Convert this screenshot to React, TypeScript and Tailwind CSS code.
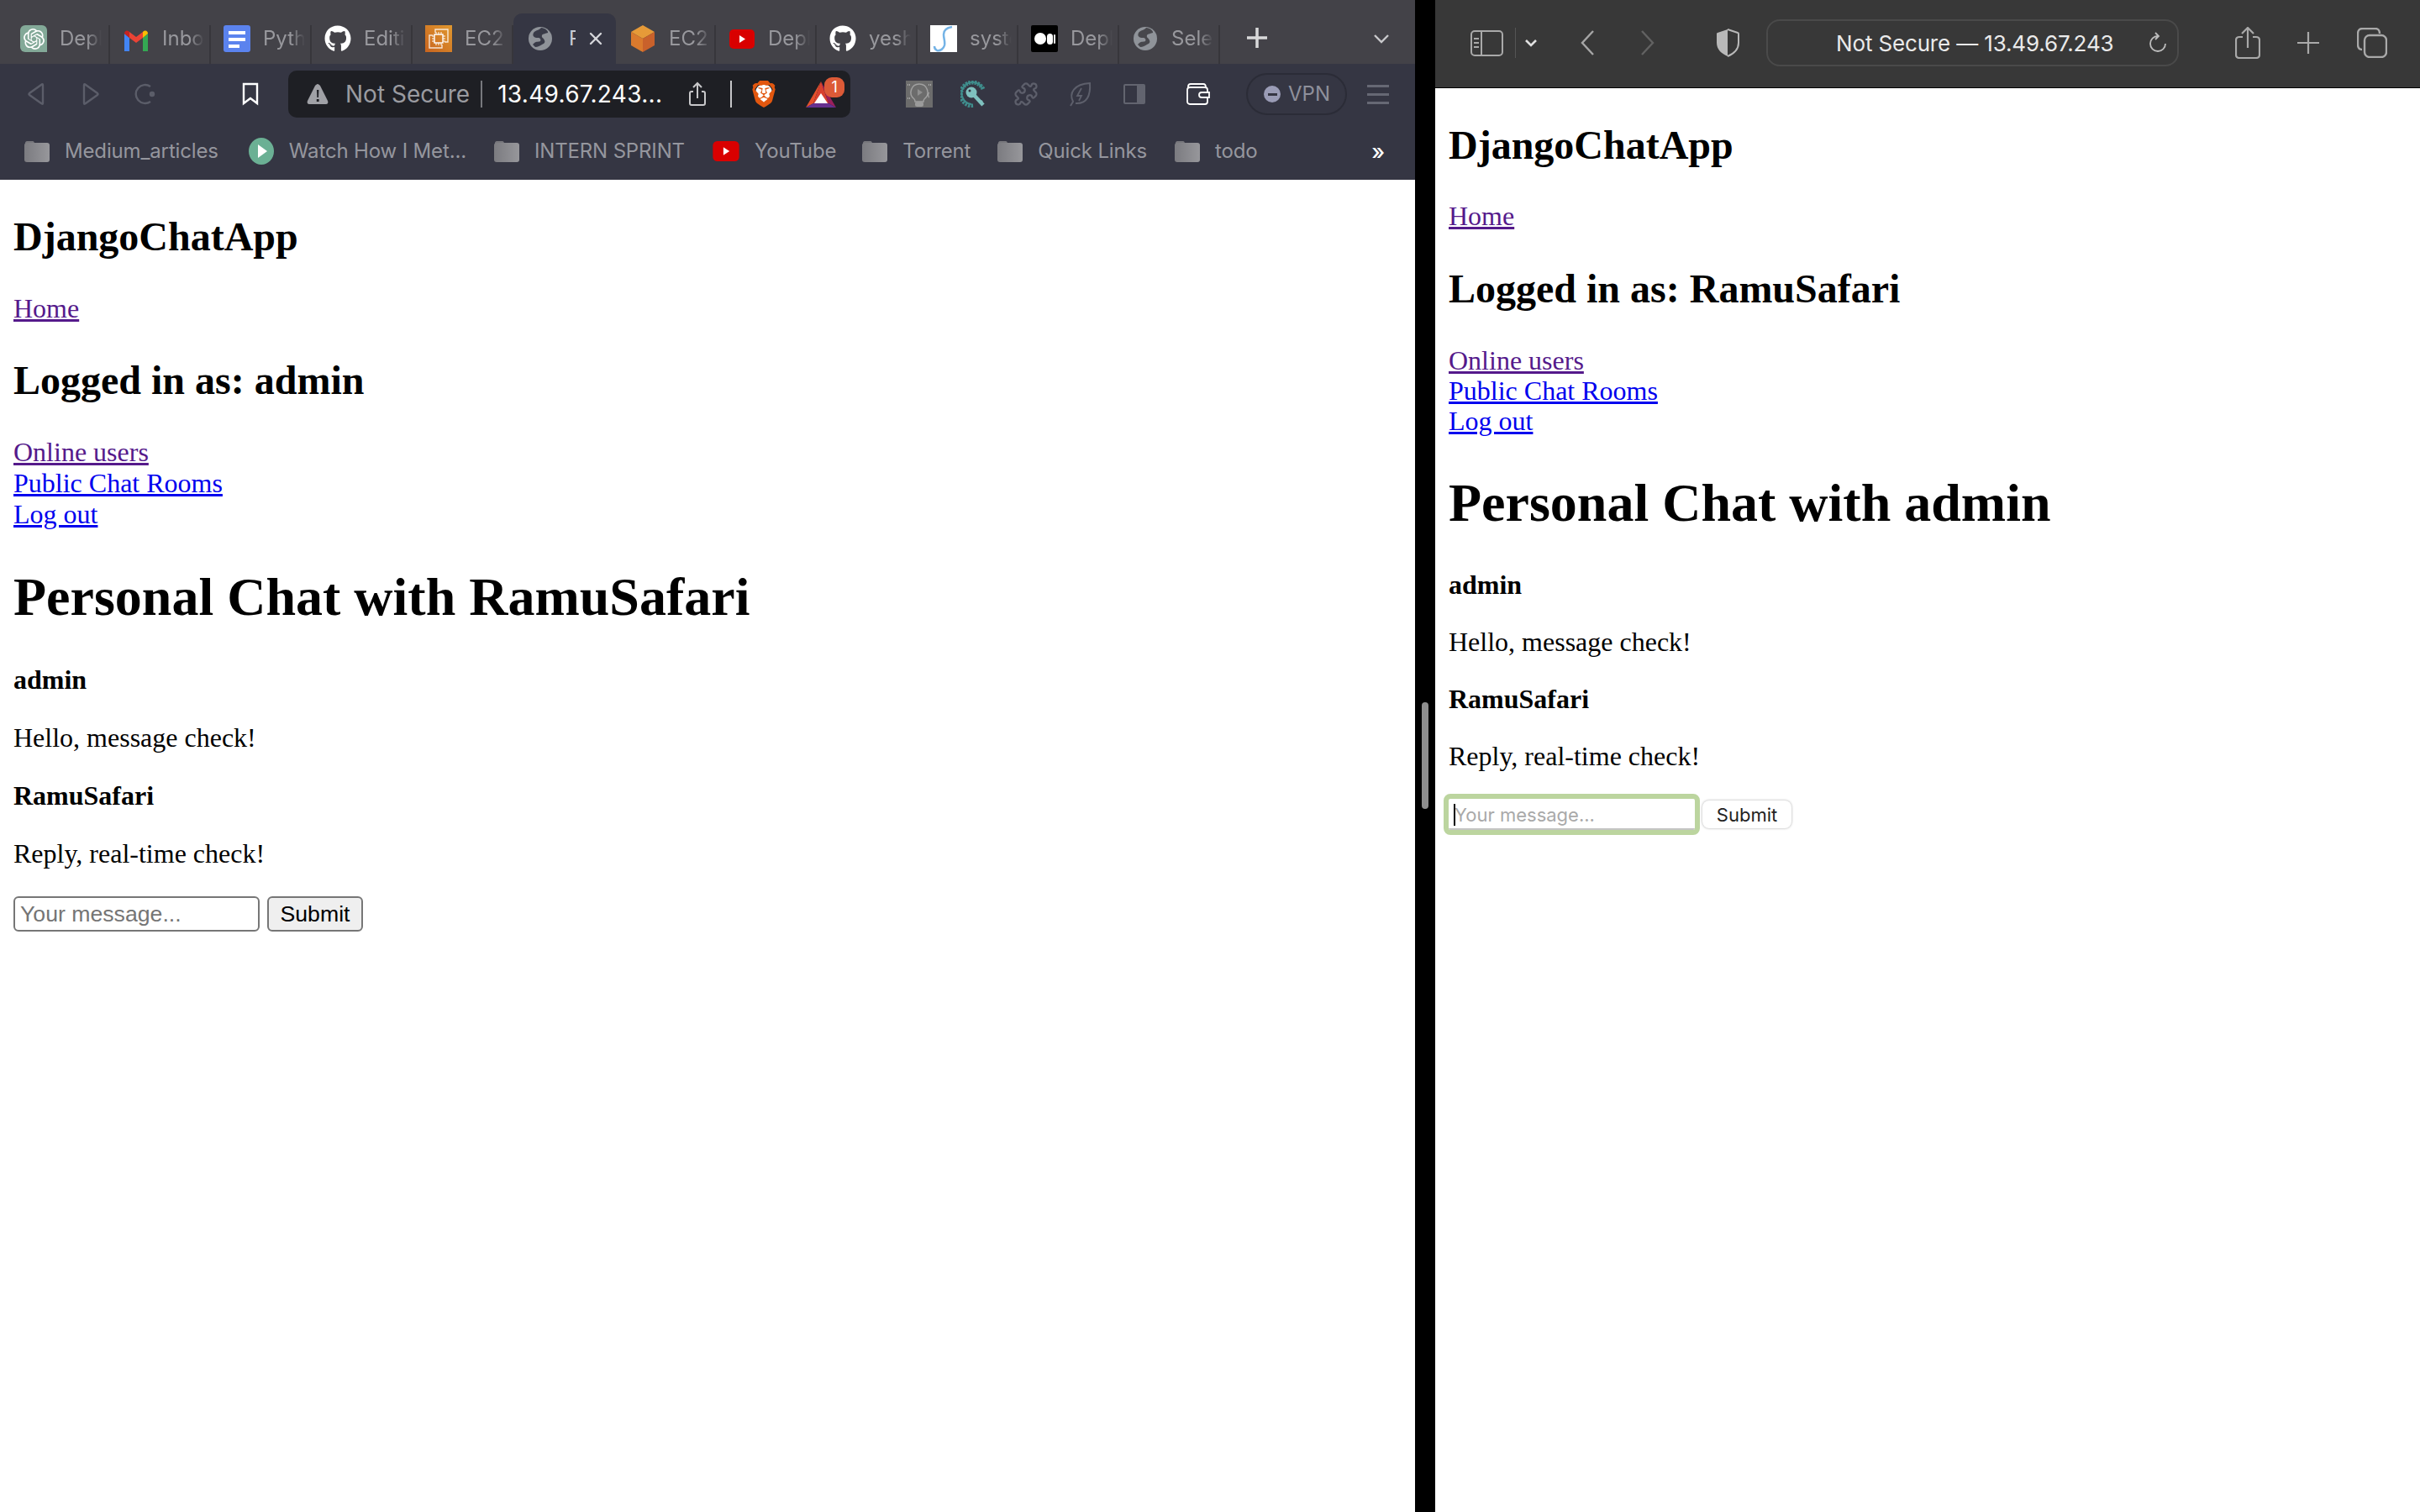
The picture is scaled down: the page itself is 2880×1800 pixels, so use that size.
import { ReactNode } from 'react';
import { FaGithub } from 'react-icons/fa';
import { SiBrave, SiOpenai } from 'react-icons/si';
import { Puzzle, X } from 'lucide-react';

const Gmail = () => (
  <svg width="32" height="32" viewBox="0 0 32 32">
    <path d="M2 10v21h6V15z" fill="#4285f4" />
    <path d="M30 10v21h-6V15z" fill="#34a853" />
    <path d="M8 15l8 6 8-6V8l-8 6-8-6z" fill="#ea4335" />
    <path d="M2 10c0-3 3-5 6-2v7z" fill="#c5221f" />
    <path d="M30 10c0-3-3-5-6-2v7z" fill="#fbbc04" />
  </svg>
);

const ChatGpt = () => (
  <div className="flex h-8 w-8 items-center justify-center rounded-[6px] rounded-br-none bg-[#83a998]">
    <SiOpenai className="text-[25px] text-white" />
  </div>
);

const Docs = () => (
  <div className="flex h-8 w-8 flex-col gap-[4px] rounded-[3px] bg-[#5b83ee] pl-[6px] pt-[7px]">
    <div className="h-[4px] w-5 bg-white" />
    <div className="h-[4px] w-5 bg-white" />
    <div className="h-[4px] w-[13px] bg-white" />
  </div>
);

const Ec2 = () => (
  <div className="flex h-8 w-8 items-center justify-center bg-gradient-to-tr from-[#c8641f] to-[#e0982f]">
    <svg width="26" height="26" viewBox="0 0 26 26" fill="none" stroke="#fff" strokeWidth="1.4">
      <path d="M9 6V2h15v15h-4" opacity=".8" />
      <path d="M6 9H2v15h15v-4" opacity=".8" />
      <rect x="8" y="8" width="10" height="10" />
      <path d="M10 5v3M13 5v3M16 5v3M10 18v3M13 18v3M16 18v3M5 10h3M5 13h3M5 16h3M18 10h3M18 13h3M18 16h3" strokeWidth="1" />
    </svg>
  </div>
);

const Cube = () => (
  <svg width="32" height="32" viewBox="0 0 28 32">
    <path d="M14 0l14 8-14 8L0 8z" fill="#e69a38" />
    <path d="M0 8l14 8v16L0 24z" fill="#da7a2d" />
    <path d="M28 8L14 16v16l14-8z" fill="#c9612b" />
  </svg>
);

const Globe = ({ bg = '#434248', size = 28 }: { bg?: string; size?: number }) => (
  <svg width={size} height={size} viewBox="0 0 28 28">
    <circle cx="14" cy="14" r="14" fill="#8f9399" />
    <path d="M15 1c-2 3-7 3-9 6-2 4 1 6 5 6 3 0 4 2 3 4-1 1-5 0-7 2l-2 2 3 3c3 0 6-2 8-3 3-1 4-3 3-5-1-3-4-3-3-6 1-2 5-2 7-3 1-2-4-6-8-6z" fill={bg} opacity=".95" />
  </svg>
);

const YouTube = ({ w = 30, h = 23 }: { w?: number; h?: number }) => (
  <svg width={w} height={h} viewBox="0 0 30 23">
    <rect width="30" height="23" rx="5" fill="#d90000" />
    <path d="M12 7l7 4.5-7 4.5z" fill="#fff" />
  </svg>
);

const Scribble = () => (
  <div className="h-8 w-8 bg-white">
    <svg width="32" height="32" viewBox="0 0 32 32" fill="none" stroke="#74b3e6" strokeWidth="2.5">
      <path d="M26 2c-6 1-10 4-10 9 0 5 2 8 1 13-1 4-5 7-9 6-2-1-3-3-3-5" />
    </svg>
  </div>
);

const Medium = () => (
  <div className="flex h-8 w-8 items-center justify-center gap-[1px] rounded-[2px] bg-black">
    <div className="h-[14px] w-[14px] rounded-full bg-white" />
    <div className="h-[13px] w-[7px] rounded-full bg-white" />
    <div className="h-[11px] w-[2px] rounded-full bg-white" />
  </div>
);

const tabs: { icon: ReactNode; label: string }[] = [
  { icon: <ChatGpt />, label: 'Deploying' },
  { icon: <Gmail />, label: 'Inbox' },
  { icon: <Docs />, label: 'Python' },
  { icon: <FaGithub className="text-[32px] text-white" />, label: 'Editing' },
  { icon: <Ec2 />, label: 'EC2' },
];

const tabsAfter: { icon: ReactNode; label: string }[] = [
  { icon: <Cube />, label: 'EC2' },
  { icon: <YouTube />, label: 'Deploy' },
  { icon: <FaGithub className="text-[32px] text-white" />, label: 'yeshwant' },
  { icon: <Scribble />, label: 'system' },
  { icon: <Medium />, label: 'Deploy' },
  { icon: <Globe />, label: 'Selenium' },
];

function Tab({ icon, label }: { icon: ReactNode; label: string }) {
  return (
    <div className="mt-[30px] flex h-[46px] w-[120px] shrink-0 items-start border-r-2 border-[#37363b] pl-[15px] first:w-[122px]">
      <div className="flex h-8 w-8 shrink-0 items-center justify-center">{icon}</div>
      <span className="ml-[15px] w-[50px] overflow-hidden whitespace-nowrap text-[24px] leading-8 text-[#98989d] [mask-image:linear-gradient(to_right,black_65%,transparent)]">
        {label}
      </span>
    </div>
  );
}

const Folder = () => (
  <svg width="30" height="26" viewBox="0 0 30 26" className="shrink-0">
    <defs>
      <linearGradient id="folderfill" x1="0" x2="1" y1="0" y2="0">
        <stop offset="0" stopColor="#7b7b80" />
        <stop offset="1" stopColor="#97979b" />
      </linearGradient>
    </defs>
    <path d="M1 3c0-1 1-2 2-2h7c1 0 2 1 2 3H1z" fill="#77777c" />
    <rect x="0" y="3" width="30" height="23" rx="3" fill="url(#folderfill)" />
  </svg>
);

const WatchIcon = () => (
  <svg width="30" height="32" viewBox="0 0 30 32" className="shrink-0">
    <ellipse cx="15" cy="16" rx="15" ry="16" fill="#6bb094" />
    <path d="M11 8l11 8-11 8z" fill="#fff" />
  </svg>
);

function Bookmark({ icon, label, gapRight = 'mr-[33px]' }: { icon: ReactNode; label: string; gapRight?: string }) {
  return (
    <div className={`flex items-center gap-[18px] ${gapRight}`}>
      {icon}
      <span className="whitespace-nowrap text-[24px] tracking-[-0.15px] text-[#95969e]">{label}</span>
    </div>
  );
}

const Lion = () => (
  <div className="relative h-9 w-8">
    <div className="absolute left-[6px] top-[6px] h-[24px] w-[20px] rounded-full bg-white" />
    <SiBrave className="absolute inset-0 h-9 w-8 text-[#e2570f]" />
  </div>
);

const Bat = () => (
  <svg width="36" height="31" viewBox="0 0 36 31">
    <path d="M18 0L0 31l9-5z" fill="#e5512c" />
    <path d="M18 0l18 31-9-5z" fill="#9b1f5c" />
    <path d="M18 0L9 26h18z" fill="#d8402f" />
    <path d="M0 31h36l-9-5H9z" fill="#66308f" />
    <path d="M18 14l8 12H10z" fill="#fff" />
  </svg>
);

const KeyIcon = () => (
  <svg width="32" height="32" viewBox="0 0 32 32" fill="none">
    <path d="M27 10A14 14 0 1 0 16 30" stroke="#3f8d8c" strokeWidth="5" strokeDasharray="2.4 1.2" />
    <path d="M26 9A13 13 0 1 0 13 28" stroke="#3f8d8c" strokeWidth="2" />
    <circle cx="13" cy="14" r="6.5" fill="#7fc1bf" />
    <circle cx="11" cy="12" r="1.5" fill="#353643" />
    <path d="M16 17l11 12" stroke="#7fc1bf" strokeWidth="4.5" />
    <path d="M23 27l3-3" stroke="#7fc1bf" strokeWidth="2.5" />
  </svg>
);

const BulbIcon = () => (
  <svg width="32" height="32" viewBox="0 0 32 32" className="bg-[#6c6c6c]" fill="none">
    <path d="M16 4a10 10 0 0 0-6 18c1 1 1 2 1 3h10c0-1 0-2 1-3a10 10 0 0 0-6-18z" stroke="#a0a0a0" strokeWidth="1.5" />
    <path d="M14 10l6 4-6 4z" fill="#8f8f8f" />
    <rect x="11" y="25" width="10" height="6" rx="2.5" fill="#9b9b9b" />
    <path d="M28 14c-1 1-1 1-1 2s-1 1-1 1 1 0 1 1 0 2 1 2" stroke="#b8b8b8" strokeWidth="1" />
    <path d="M2 5h3M27 5h3M2 21h3" stroke="#a8a8a8" strokeWidth="2" strokeDasharray="1 1" />
  </svg>
);

const LeafIcon = () => (
  <svg width="28" height="30" viewBox="0 0 28 30" fill="none" stroke="#5d5f6b" strokeWidth="2">
    <path d="M3 29l3-5C1 14 7 3 26 2c1 14-3 25-17 24" />
    <path d="M16 8l-5 9h5l-3 6" strokeWidth="1.8" />
  </svg>
);

const SidePanelIcon = () => (
  <div className="flex h-6 w-[26px] overflow-hidden rounded-[2px] border-2 border-[#62646f]">
    <div className="flex-1" />
    <div className="w-2 bg-[#62646f]" />
  </div>
);

const WalletIcon = () => (
  <svg width="28" height="26" viewBox="0 0 28 26" fill="none" stroke="#fff" strokeWidth="1.8">
    <path d="M2 6V4c0-2 1-3 3-3h15c2 0 3 1 3 4" />
    <rect x="1" y="5" width="24" height="20" rx="3" />
    <path d="M27 11h-9c-2 0-3 1-3 3s1 3 3 3h9z" fill="#353643" />
  </svg>
);

function BraveChrome() {
  return (
    <div className="h-[214px] shrink-0 bg-[#353643] font-['Inter',sans-serif]">
      {/* tab strip */}
      <div className="flex h-[76px] items-start bg-[#434248] pl-[9px]">
        {tabs.map((t, i) => (
          <Tab key={i} icon={t.icon} label={t.label} />
        ))}
        <div className="mt-4 flex h-[60px] w-[122px] shrink-0 items-start rounded-t-[10px] bg-[#353643] pl-[18px] pt-4">
          <Globe bg="#353643" />
          <span className="ml-5 w-2 overflow-hidden text-[24px] leading-7 text-[#c9cbd2]">P</span>
          <X className="ml-[12px] mt-[2px] h-6 w-6 text-[#d5d6da]" strokeWidth={2.4} />
        </div>
        <div className="flex [&>*:first-child]:w-[119px] [&>*:first-child]:pl-[16px]">
          {tabsAfter.map((t, i) => (
            <Tab key={i} icon={t.icon} label={t.label} />
          ))}
        </div>
        <svg width="24" height="24" viewBox="0 0 24 24" className="ml-[32px] mt-[33px]" stroke="#d9d9da" strokeWidth="3.5">
          <path d="M12 0v24M0 12h24" />
        </svg>
        <svg width="18" height="11" viewBox="0 0 18 11" fill="none" className="ml-[127px] mt-[41px]" stroke="#c9c9cc" strokeWidth="2.4">
          <path d="M1 1l8 8 8-8" />
        </svg>
      </div>

      {/* toolbar */}
      <div className="flex h-[72px] items-center pl-[33px]">
        <svg width="20" height="26" viewBox="0 0 20 26" fill="none" stroke="#5b5d69" strokeWidth="2.4">
          <path d="M18 2v22c0 1-1 1-2 0L2 14c-1-1-1-1 0-2L16 2c1-1 2-1 2 0z" />
        </svg>
        <svg width="20" height="26" viewBox="0 0 20 26" fill="none" stroke="#5b5d69" strokeWidth="2.4" className="ml-[45px]">
          <path d="M2 2v22c0 1 1 1 2 0l14-10c1-1 1-1 0-2L4 2C3 1 2 1 2 2z" />
        </svg>
        <svg width="26" height="26" viewBox="0 0 26 26" fill="none" stroke="#5b5d69" strokeWidth="2.4" className="ml-[41px]">
          <path d="M20 4A11 11 0 1 0 20 22" />
          <circle cx="22" cy="13" r="2" fill="#5b5d69" />
        </svg>
        <svg width="20" height="28" viewBox="0 0 20 28" fill="none" stroke="#fff" strokeWidth="2.4" className="ml-[103px]">
          <path d="M2 2h16v23l-8-6-8 6z" />
        </svg>
        <div className="ml-[35px] flex h-14 w-[669px] items-center rounded-[10px] bg-[#1e1f24] pl-[22px]">
          <svg width="26" height="26" viewBox="0 0 26 26" className="shrink-0">
            <path d="M13 1c1 0 2 1 3 2l9 18c1 2 0 4-2 4H3c-2 0-3-2-2-4l9-18c1-1 2-2 3-2z" fill="#a0a1a6" />
            <path d="M12 8h2.400l-.4 9h-1.600zM11.800 19h2.800v3h-2.800z" fill="#1e1f24" />
          </svg>
          <span className="ml-5 text-[28px] text-[#9a9ba0]">Not Secure</span>
          <div className="ml-[13px] h-[32px] w-[2px] bg-[#77787d]" />
          <span className="ml-[18px] w-[200px] whitespace-nowrap text-[28px] tracking-[0.3px] text-white">13.49.67.243...</span>
          <svg width="22" height="30" viewBox="0 0 22 30" fill="none" stroke="#c8c8ca" strokeWidth="2" className="ml-[27px] shrink-0">
            <path d="M6 12H4c-2 0-2 1-2 2v12c0 2 1 2 2 2h14c1 0 2 0 2-2V14c0-1 0-2-2-2h-2M11 20V2M6 7l5-5 5 5" />
          </svg>
          <div className="ml-[28px] h-[32px] w-[2px] bg-[#c6c6c8]" />
          <div className="ml-[22px]"><Lion /></div>
          <div className="relative ml-[34px]">
            <Bat />
            <div className="absolute -top-[5px] left-[22px] flex h-6 w-6 items-center justify-center rounded-[9px] bg-[#dc5a37] text-[18px] text-white">1</div>
          </div>
        </div>
        <div className="ml-[66px]"><BulbIcon /></div>
        <div className="ml-[33px]"><KeyIcon /></div>
        <Puzzle className="ml-[31px] h-[30px] w-[30px] text-[#5d5f6b]" strokeWidth={1.8} />
        <div className="ml-[35px]"><LeafIcon /></div>
        <div className="ml-[38px]"><SidePanelIcon /></div>
        <div className="ml-[49px]"><WalletIcon /></div>
        <div className="ml-[43px] flex h-[50px] w-[120px] items-center rounded-full border-2 border-[#2b2c37] pl-[19px]">
          <div className="flex h-5 w-5 items-center justify-center rounded-full bg-[#9a9cb6]">
            <div className="h-[3px] w-[11px] bg-[#353643]" />
          </div>
          <span className="ml-[9px] text-[24px] text-[#8e909b]">VPN</span>
        </div>
        <div className="ml-[24px] flex w-[26px] flex-col gap-[7px]">
          <div className="h-[3px] bg-[#666874]" />
          <div className="h-[3px] bg-[#666874]" />
          <div className="h-[3px] bg-[#666874]" />
        </div>
      </div>

      {/* bookmarks */}
      <div className="flex h-[66px] items-center pb-[2px] pl-[29px]">
        <Bookmark icon={<Folder />} label="Medium_articles" gapRight="mr-[36px]" />
        <Bookmark icon={<WatchIcon />} label="Watch How I Met..." />
        <Bookmark icon={<Folder />} label="INTERN SPRINT" />
        <Bookmark icon={<YouTube w={32} h={24} />} label="YouTube" gapRight="mr-[31px]" />
        <Bookmark icon={<Folder />} label="Torrent" gapRight="mr-[32px]" />
        <Bookmark icon={<Folder />} label="Quick Links" />
        <Bookmark icon={<Folder />} label="todo" gapRight="" />
        <span className="ml-auto mr-[36px] text-[26px] font-medium text-white">»</span>
      </div>
    </div>
  );
}

function SafariChrome() {
  return (
    <div className="flex h-[105px] shrink-0 items-center border-b border-black bg-[#383838] pb-[2px] pl-[42px] font-['Inter',sans-serif]">
      <div className="flex h-[31px] w-[39px] rounded-[5px] border-2 border-[#a9a9a9]">
        <div className="flex w-[12px] flex-col items-center justify-center gap-[3px] border-r-2 border-[#a9a9a9]">
          <div className="h-[2px] w-[6px] bg-[#a9a9a9]" />
          <div className="h-[2px] w-[6px] bg-[#a9a9a9]" />
          <div className="h-[2px] w-[6px] bg-[#a9a9a9]" />
        </div>
      </div>
      <div className="ml-[14px] h-[36px] w-[1px] bg-[#555555]" />
      <svg width="14" height="9" viewBox="0 0 14 9" fill="none" stroke="#e0e0e0" strokeWidth="2.6" className="ml-[11px]">
        <path d="M1 1l6 6 6-6" />
      </svg>
      <svg width="16" height="30" viewBox="0 0 16 30" fill="none" stroke="#a6a6a6" strokeWidth="2.4" className="ml-[52px]">
        <path d="M15 1L2 15l13 14" />
      </svg>
      <svg width="16" height="30" viewBox="0 0 16 30" fill="none" stroke="#626262" strokeWidth="2.4" className="ml-[56px]">
        <path d="M1 1l13 14L1 29" />
      </svg>
      <svg width="28" height="34" viewBox="0 0 28 34" className="ml-[73px]">
        <path d="M14 1L2 5c-1 0-1 1-1 2v10c0 8 6 13 13 16z" fill="#b9b9b9" />
        <path d="M14 1l12 4c1 0 1 1 1 2v10c0 8-6 13-13 16" fill="none" stroke="#b9b9b9" strokeWidth="2" />
      </svg>
      <div className="ml-[32px] flex h-[56px] w-[491px] items-center rounded-[16px] border-2 border-[#4a4a4a] pl-[81px]">
        <span className="w-[372px] whitespace-nowrap text-[26px] tracking-[-0.15px] text-[#eaeaea]">Not Secure — 13.49.67.243</span>
        <svg width="22" height="26" viewBox="0 0 22 26" fill="none" stroke="#bdbdbd" strokeWidth="1.8" className="shrink-0">
          <path d="M11 5a9 9 0 1 0 9 9M8 1l4 4-4 4" />
        </svg>
      </div>
      <svg width="30" height="38" viewBox="0 0 30 38" fill="none" stroke="#a9a9a9" strokeWidth="2.2" className="ml-[67px]">
        <path d="M9 12H5c-3 0-4 1-4 4v17c0 3 1 4 4 4h20c3 0 4-1 4-4V16c0-3-1-4-4-4h-4M15 25V2M8 8l7-7 7 7" />
      </svg>
      <svg width="28" height="28" viewBox="0 0 28 28" stroke="#a9a9a9" strokeWidth="2.2" className="ml-[43px]">
        <path d="M14 1v26M1 14h26" />
      </svg>
      <svg width="36" height="36" viewBox="0 0 36 36" fill="none" stroke="#a9a9a9" strokeWidth="2.4" className="ml-[44px]">
        <path d="M27 7c0-4-2-6-5-6H7C3 1 1 3 1 7v13c0 4 2 6 5 6" />
        <rect x="9" y="9" width="26" height="26" rx="6" />
      </svg>
    </div>
  );
}

function ChatPage({ other, focused = false }: { other: string; focused?: boolean }) {
  const me = other === 'admin' ? 'RamuSafari' : 'admin';
  return (
    <div className={`flex-1 bg-white px-4 font-['Liberation_Serif',serif] text-[32px] text-black ${focused ? 'leading-[36px]' : 'leading-[37px]'}`}>
      <h2 className="pt-[40px] text-[48px] font-bold leading-[55px]">DjangoChatApp</h2>
      <p className={focused ? 'mt-[39px]' : 'mt-[40px]'}>
        <a className="text-[#551a8b] underline">Home</a>
      </p>
      <h2 className={`text-[48px] font-bold leading-[55px] ${focused ? 'mt-[41px]' : 'mt-[39px]'}`}>Logged in as: {me}</h2>
      <div className="mt-[40px]">
        <a className="block w-fit text-[#551a8b] underline">Online users</a>
        <a className="block w-fit text-[#0000ee] underline">Public Chat Rooms</a>
        <a className="block w-fit text-[#0000ee] underline">Log out</a>
      </div>
      <h1 className="mt-[43px] text-[64px] font-bold leading-[74px]">Personal Chat with {other}</h1>
      <p className={`font-bold ${focused ? 'mt-[42px]' : 'mt-[43px]'}`}>admin</p>
      <p className="mt-[32px]">Hello, message check!</p>
      <p className="mt-[32px] font-bold">RamuSafari</p>
      <p className="mt-[32px]">Reply, real-time check!</p>
      {focused ? (
        <form className="mt-[33px] flex items-center">
          <div className="relative">
            <input
              placeholder="Your message..."
              className="block h-[37px] w-[293px] rounded-[2px] border-b-2 border-[#c4c4c4] bg-white pl-[7px] pt-[2px] font-['Inter',sans-serif] text-[22px] outline-[6px] outline-[#bcd59f] placeholder:text-[#a9a9a9]"
            />
            <div className="absolute left-[6px] top-[6px] h-[26px] w-[2px] bg-black" />
          </div>
          <button
            type="button"
            className="ml-[9px] h-[33px] w-[106px] rounded-[8px] bg-white font-['Inter',sans-serif] text-[22px] leading-none text-[#222222] shadow-[0_0_3px_rgba(0,0,0,0.35)]"
          >
            Submit
          </button>
        </form>
      ) : (
        <form className="mt-[32px] flex items-center font-['Liberation_Sans',sans-serif] text-[26.67px]">
          <input
            placeholder="Your message..."
            className="h-[42px] w-[293px] rounded-[6px] border-2 border-[#767676] bg-white px-[6px] placeholder:text-[#757575]"
          />
          <button
            type="button"
            className="ml-[9px] h-[42px] w-[114px] rounded-[6px] border-2 border-[#767676] bg-[#efefef] text-black"
          >
            Submit
          </button>
        </form>
      )}
    </div>
  );
}

export default function App() {
  return (
    <div className="flex h-[1800px] w-[2880px] overflow-hidden bg-black">
      <div className="flex w-[1684px] shrink-0 flex-col">
        <BraveChrome />
        <ChatPage other="RamuSafari" />
      </div>
      <div className="w-6 shrink-0 bg-black pl-2 pt-[836px]">
        <div className="h-[127px] w-2 rounded-full bg-[#8e8e8e]" />
      </div>
      <div className="flex flex-1 flex-col">
        <SafariChrome />
        <ChatPage other="admin" focused />
      </div>
    </div>
  );
}
